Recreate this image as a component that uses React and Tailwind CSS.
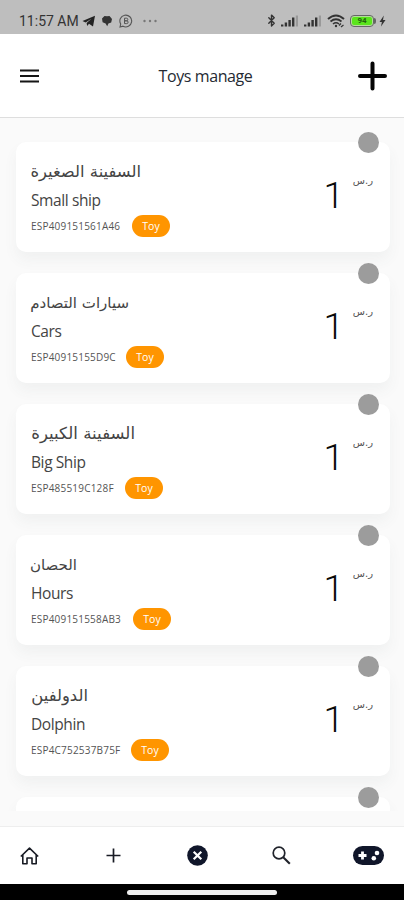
import { Bluetooth } from 'lucide-react';

// ---------------------------------------------------------------------------
// ---------------------------------------------------------------------------
const TOYS = [
  { ar: 'السفينة الصغيرة', en: 'Small ship', code: 'ESP409151561A46', arClass: 'w-[110px] text-[16.4px]', codeWidth: 'w-[90px]' },
  { ar: 'سيارات التصادم',  en: 'Cars',       code: 'ESP40915155D9C',  arClass: 'w-[98px] text-[15px]',    codeWidth: 'w-[84px]' },
  { ar: 'السفينة الكبيرة', en: 'Big Ship',   code: 'ESP485519C128F',  arClass: 'w-[104px] text-[16.6px]', codeWidth: 'w-[83px]' },
  { ar: 'الحصان',          en: 'Hours',      code: 'ESP409151558AB3', arClass: 'w-[46px] text-[15px]',    codeWidth: 'w-[91px]' },
  { ar: 'الدولفين',        en: 'Dolphin',    code: 'ESP4C752537B75F', arClass: 'w-[57px] text-[16.4px]',  codeWidth: 'w-[89px]' },
];

// ---------------------------------------------------------------------------
// Status bar
// ---------------------------------------------------------------------------
function SignalIcon() {
  return (
    <svg width="18" height="12" viewBox="0 0 18 12">
      <g fill="#333">
        <rect x="0" y="9.5" width="2.4" height="2" />
        <rect x="3.7" y="7.5" width="2.4" height="4" />
        <rect x="7.4" y="5" width="2.4" height="6.5" />
        <rect x="11" y="2.5" width="2.4" height="9" />
      </g>
      <rect x="14.8" y="0.5" width="2.2" height="11" fill="#999" />
    </svg>
  );
}

function StatusBar() {
  return (
    <div className="flex h-[34px] shrink-0 items-center bg-[#bebebe] pt-[7px] pr-[18px] pl-[19px] text-[#333]">
      <span className="w-[60px] font-['Roboto',sans-serif] text-[14px] leading-none whitespace-nowrap">11:57 AM</span>
      <svg className="ml-[3px]" width="14" height="12" viewBox="0 0 14 12">
        <path d="M0.5 6 13 0.8 11 11.5 7 8.8 5.2 11 4.6 8 9.5 3.8 3.6 7.4Z" fill="#222" />
      </svg>
      <svg className="ml-[5px]" width="12" height="12" viewBox="0 0 12 12">
        <path d="M1 3.6 3.5 1 6 1.3 8.5 1 11 4 10.2 7.4 7.4 8.5 6.2 11.3 4.6 8.5 1.6 7.3Z" fill="#333" />
      </svg>
      <svg className="ml-1.5" width="14" height="14" viewBox="0 0 14 14" fill="none" stroke="#555">
        <path d="M1 13 1.7 10A5.9 5.9 0 1 1 4 12.2Z" strokeWidth="1.1" />
        <path d="M5.5 4.2h2a1.3 1.3 0 0 1 0 2.6h-2zM5.5 6.8h2.2a1.4 1.4 0 0 1 0 2.8H5.5z" />
      </svg>
      <svg className="ml-2.5" width="14" height="4" viewBox="0 0 14 4" fill="#777">
        <circle cx="1.5" cy="2" r="1.2" />
        <circle cx="7" cy="2" r="1.2" />
        <circle cx="12.5" cy="2" r="1.2" />
      </svg>

      <div className="ml-auto flex items-center">
        <Bluetooth width={13} height={15} strokeWidth={2.6} />
        <span className="ml-[3px]"><SignalIcon /></span>
        <span className="ml-[5px]"><SignalIcon /></span>
        <svg className="ml-[5px]" width="18" height="14" viewBox="0 0 18 14" fill="none" stroke="#333">
          <path d="M1 5Q9-2 17 5" strokeWidth="2" />
          <path d="M3.5 7.5Q9 3 14.5 7.5" strokeWidth="1.7" />
          <path d="M6 10Q9 7.5 12 10" strokeWidth="1.6" />
          <circle cx="9" cy="12" r="1.2" fill="#333" stroke="none" />
          <path d="M12 11.5 14 9.5M14 13l2.5-2" strokeWidth="1.2" />
        </svg>
        <span className="ml-[5px] flex h-3 w-6 items-center justify-center rounded border border-[#666] bg-[#b4dc9c] p-px">
          <span className="flex h-full w-full items-center justify-center rounded-[2px] bg-[#5ae51c] font-['Roboto',sans-serif] text-[8px] leading-none font-bold text-[#226410]">
            94
          </span>
        </span>
        <span className="h-1.5 w-0.5 rounded-r bg-[#666]" />
        <svg className="ml-[3px]" width="7" height="12" viewBox="0 0 7 12">
          <path d="M4.8 0.5 0.5 7h2.4L2 11.5 6.5 5H4Z" fill="#333" />
        </svg>
      </div>
    </div>
  );
}

// ---------------------------------------------------------------------------
// Header
// ---------------------------------------------------------------------------
function Header() {
  return (
    <header className="flex h-[84px] shrink-0 items-center justify-between border-b border-[#dedede] bg-white pr-[17px] pl-5">
      <button aria-label="Menu" className="flex w-[30px]">
        <svg width="19" height="14" viewBox="0 0 19 14" stroke="#151515" strokeWidth="1.9">
          <path d="M0 1.5H19M0 7H19M0 12.5H19" />
        </svg>
      </button>
      <h1 className="pl-1 text-[16px] leading-none tracking-[-0.4px] text-[#252a33]">Toys manage</h1>
      <button aria-label="Add toy">
        <svg width="30" height="30" viewBox="0 0 30 30" stroke="#050505" strokeWidth="4" strokeLinecap="round">
          <path d="M15.5 2.5V27.5M3 15H28" />
        </svg>
      </button>
    </header>
  );
}

// ---------------------------------------------------------------------------
// Toy card
// ---------------------------------------------------------------------------
function ToyCard({ toy }) {
  return (
    <article className="relative flex h-[110px] shrink-0 justify-between rounded-[10px] bg-white pr-[17px] pl-[15px] shadow-[0_8px_14px_rgba(70,90,100,0.055)]">
      <span className="absolute -top-2.5 right-[11px] size-[21px] rounded-full bg-[#9c9c9c]" />
      {toy && (
        <>
          <div className="flex flex-col items-start pt-[18px]">
            <p lang="ar" dir="rtl" className={`${toy.arClass} h-6 font-['DejaVu_Sans',sans-serif] leading-6 whitespace-nowrap text-[#444]`}>
              {toy.ar}
            </p>
            <p className="mt-1 h-6 text-[15.5px] leading-6 tracking-[-0.4px] text-[#444]">{toy.en}</p>
            <div className="mt-[3px] flex items-center">
              <span className={`${toy.codeWidth} text-[10px] leading-none tracking-[0.2px] whitespace-nowrap text-[#555]`}>{toy.code}</span>
              <span className="ml-[11px] flex h-[22px] w-[38px] items-center justify-center rounded-full bg-[#ff9500] text-[10.5px] leading-none text-white">
                Toy
              </span>
            </div>
          </div>
          <div className="flex items-start">
            <span className="pt-[34px] font-['Roboto',sans-serif] text-[37px] leading-[40px] font-light text-[#0a0a0a]">1</span>
            <span lang="ar" dir="rtl" className="ml-[9px] w-5 pt-[33px] font-['DejaVu_Sans',sans-serif] text-[10px] leading-3 whitespace-nowrap text-[#555]">
              ر.س
            </span>
          </div>
        </>
      )}
    </article>
  );
}

// ---------------------------------------------------------------------------
// Bottom navigation
// ---------------------------------------------------------------------------
const navButton = 'flex w-[31px] shrink-0 justify-center';

function BottomNav() {
  return (
    <nav className="flex h-[58px] shrink-0 items-center gap-[53px] border-t border-[#eee] bg-white pl-3.5">
      <button aria-label="Home" className={navButton}>
        <svg width="19" height="18" viewBox="0 0 19 18" fill="none" stroke="#181b24" strokeWidth="1.6" strokeLinejoin="round">
          <path d="M0.8 9.5 9.5 1.2 18.2 9.5M2.8 8V16.8H7V11H12V16.8H16.2V8" />
        </svg>
      </button>
      <button aria-label="Add" className={navButton}>
        <svg width="15" height="15" viewBox="0 0 15 15" stroke="#181b24" strokeWidth="1.7">
          <path d="M7.5 0.5V14.5M0.5 7.5H14.5" />
        </svg>
      </button>
      <button aria-label="Close" className={navButton}>
        <svg width="21" height="21" viewBox="0 0 21 21">
          <circle cx="10.5" cy="10.5" r="10.3" fill="#10162a" />
          <path d="M6.7 6.7 14.3 14.3M14.3 6.7 6.7 14.3" stroke="#fff" strokeWidth="2.2" />
        </svg>
      </button>
      <button aria-label="Search" className={navButton}>
        <svg width="19" height="19" viewBox="0 0 19 19" fill="none" stroke="#20232b">
          <circle cx="7" cy="7" r="5.8" strokeWidth="1.7" />
          <path d="M11.2 11.2 17.8 17.8" strokeWidth="2.1" />
        </svg>
      </button>
      <button aria-label="Toys" className={`${navButton} ml-[3px]`}>
        <svg width="31" height="19" viewBox="0 0 31 19">
          <rect width="31" height="19" rx="9.5" fill="#10162a" />
          <path d="M9.5 5.5V13.5M5.5 9.5H13.5" stroke="#fff" strokeWidth="2.8" />
          <circle cx="24" cy="7" r="2.3" fill="#fff" />
          <circle cx="20.8" cy="12.2" r="2.3" fill="#fff" />
        </svg>
      </button>
    </nav>
  );
}

export default function App() {
  return (
    <div className="flex h-[900px] w-full flex-col overflow-hidden bg-[#fafafa] font-['Open_Sans',sans-serif]">
      <StatusBar />
      <Header />
      <main className="flex h-[693px] shrink-0 flex-col gap-[21px] overflow-hidden pt-6 pr-3.5 pl-4">
        {TOYS.map((toy) => (
          <ToyCard key={toy.code} toy={toy} />
        ))}
        <ToyCard />
      </main>
      <div className="h-[15px] shrink-0" />
      <BottomNav />
      <div className="flex h-4 shrink-0 justify-center bg-black pt-1.5">
        <span className="h-[5px] w-[150px] rounded-full bg-[#eee]" />
      </div>
    </div>
  );
}
